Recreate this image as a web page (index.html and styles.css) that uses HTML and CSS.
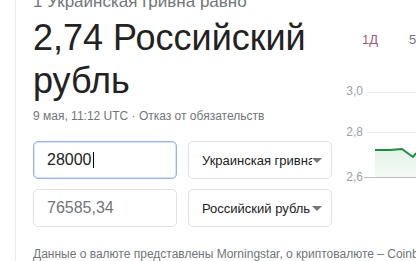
FILE: index.html
```html
<!DOCTYPE html>
<html lang="ru">
<head>
    <meta charset="UTF-8">
    <title>Конвертер валют</title>
    <link rel="stylesheet" href="styles.css">
</head>
<body>
    <div class="card">
        <div class="main">
            <div class="left">
                <div class="lead">1 Украинская гривна равно</div>
                <div class="result">2,74 Российский рубль</div>
                <div class="stamp">9 мая, 11:12 UTC · Отказ от обязательств</div>

                <div class="conv">
                    <div class="field focused">28000<span class="caret"></span></div>
                    <div class="select"><span class="sel-text">Украинская гривна</span><span class="arrow"></span></div>
                    <div class="field muted">76585,34</div>
                    <div class="select"><span class="sel-text">Российский рубль</span><span class="arrow"></span></div>
                </div>
            </div>

            <div class="chart">
                <svg width="71" height="190" viewBox="0 0 71 190">
                    <defs>
                        <linearGradient id="fill" x1="0" y1="0" x2="0" y2="1">
                            <stop offset="0" stop-color="#e3f2e7"/>
                            <stop offset="1" stop-color="#f4faf6"/>
                        </linearGradient>
                    </defs>
                    <text x="17" y="44" class="tab active">1Д</text>
                    <text x="64" y="44" class="tab">5</text>

                    <line x1="22" y1="92.5" x2="71" y2="92.5" class="grid"/>
                    <line x1="22" y1="132.5" x2="71" y2="132.5" class="grid"/>
                    <text x="18" y="95" class="axis">3,0</text>
                    <text x="18" y="136" class="axis">2,8</text>

                    <path d="M30 150 L45 150 L57 149 L68 157 L71 153 L71 177 L30 177 Z" fill="url(#fill)"/>
                    <path d="M30 150 L45 150 L57 149 L68 157 L71 153" class="line"/>

                    <line x1="19" y1="177.5" x2="71" y2="177.5" class="base"/>
                    <text x="18" y="181" class="axis">2,6</text>
                </svg>
            </div>
        </div>

        <div class="source">Данные о валюте представлены Morningstar, о криптовалюте – Coinbase</div>
    </div>
</body>
</html>
```

FILE: styles.css
```css
html, body { margin: 0; padding: 0; background: #fff; overflow: hidden; }
body { font-family: Arial, "Liberation Sans", sans-serif; color: #222; width: 416px; height: 261px; }

.card {
    margin-left: 15px;
    margin-top: -8px;
    border-left: 1px solid #ebebeb;
    padding-left: 17px;
    height: 269px;
    overflow: hidden;
}
.main { display: flex; gap: 12px; }
.left { width: 300px; flex: none; }

.lead { font-size: 17px; line-height: 20px; color: #70757a; white-space: nowrap; }
.result { font-size: 36px; line-height: 43px; margin-top: 4px; color: #222; }
.stamp { font-size: 12px; line-height: 16px; margin-top: 6px; color: #70757a; white-space: nowrap; }

.conv {
    display: grid;
    grid-template-columns: 144px 144px;
    grid-auto-rows: 38px;
    column-gap: 11px;
    row-gap: 10px;
    margin-top: 17px;
}
.field {
    box-sizing: border-box;
    border: 1px solid #dfe1e5;
    border-radius: 5px;
    padding: 0 13px;
    font-size: 16px;
    display: flex;
    align-items: center;
    color: #222;
}
.field.focused { border-color: #93b6ef; box-shadow: inset 0 0 0 1px #d6e4fa; }
.field.muted { color: #70757a; }
.caret { display: inline-block; width: 1px; height: 16px; background: #000; margin-left: 1px; }

.select {
    box-sizing: border-box;
    border: 1px solid #dfe1e5;
    border-radius: 5px;
    padding: 0 9px 0 13px;
    font-size: 13px;
    display: flex;
    align-items: center;
}
.sel-text { flex: 1; overflow: hidden; white-space: nowrap; }
.arrow {
    flex: none;
    width: 0;
    height: 0;
    border-left: 5px solid transparent;
    border-right: 5px solid transparent;
    border-top: 5px solid #757575;
}

.chart { flex: none; width: 71px; margin-top: 8px; overflow: hidden; }
.chart svg { display: block; }
.tab { font-size: 13px; fill: #70757a; font-family: Arial, "Liberation Sans", sans-serif; }
.tab.active { fill: #a05a78; }
.axis { font-size: 12px; fill: #9aa0a6; text-anchor: end; font-family: Arial, "Liberation Sans", sans-serif; }
.grid { stroke: #eeeeee; stroke-width: 1; }
.base { stroke: #bdbdbd; stroke-width: 1; }
.line { fill: none; stroke: #1e8e3e; stroke-width: 2; stroke-linejoin: round; }

.source {
    font-size: 12px;
    line-height: 16px;
    margin-top: 19px;
    color: #70757a;
    white-space: nowrap;
    overflow: hidden;
}
```
